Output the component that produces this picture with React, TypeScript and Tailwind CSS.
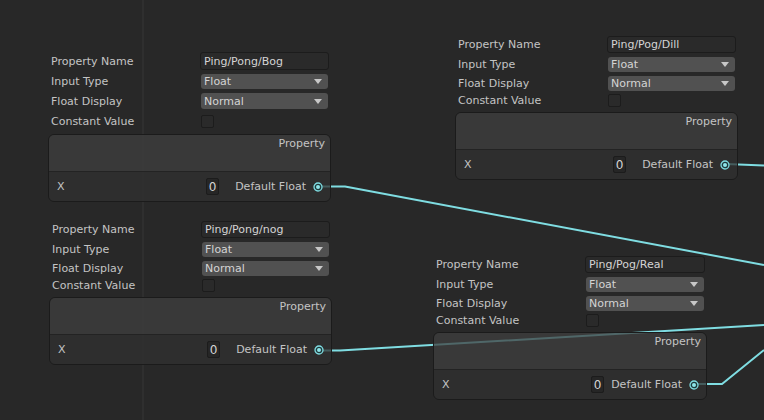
import React from "react";

type NodeProps = {
  pos: string;
  name: string;
  loose?: boolean;
};

function Dropdown({ value, h }: { value: string; h: string }) {
  return (
    <div className={`flex ${h} items-center justify-between rounded-[3px] bg-[#515151] pl-[3px] pr-[6px] text-[#d4d4d4]`}>
      <span className="leading-none">{value}</span>
      <svg width="8" height="5" viewBox="0 0 8 5">
        <path d="M0 0 L8 0 L4 5 Z" fill="#c8c8c8" />
      </svg>
    </div>
  );
}

function Port() {
  return (
    <svg width="10" height="10" viewBox="0 0 10 10" className="shrink-0">
      <circle cx="5" cy="5" r="4" fill="#1f3a3b" stroke="#7fdde2" strokeWidth="1.3" />
      <circle cx="5" cy="5" r="2" fill="#8ee6ea" />
    </svg>
  );
}

function Node({ pos, name, loose }: NodeProps) {
  return (
    <div className={`absolute ${pos}`}>
      <div className="text-[11px] leading-none text-[#c4c4c4]">
        <div className={`flex items-center ${loose ? "h-[18px]" : "h-[17px]"}`}>
          <div className="w-[152px] pl-[3px]">Property Name</div>
          <div className="mr-[2px] flex h-full flex-1 items-center rounded-[3px] border border-[#1c1c1c] bg-[#2a2a2a] pl-[3px] text-[#d4d4d4]">
            {name}
          </div>
        </div>
        <div className="mt-[4px] flex h-[15px] items-center">
          <div className="w-[153px] pl-[3px]">Input Type</div>
          <div className="mr-[3px] flex-1">
            <Dropdown value="Float" h="h-[15px]" />
          </div>
        </div>
        <div className={`mt-[4px] flex items-center ${loose ? "h-[16px]" : "h-[15px]"}`}>
          <div className="w-[153px] pl-[3px]">Float Display</div>
          <div className="mr-[3px] flex-1">
            <Dropdown value="Normal" h={loose ? "h-[16px]" : "h-[15px]"} />
          </div>
        </div>
        <div className={`flex h-[13px] items-center ${loose ? "mt-[6px]" : "mt-[3px]"}`}>
          <div className="w-[153px] pl-[3px]">Constant Value</div>
          <div className="h-[13px] w-[13px] rounded-[2px] border border-[#1c1c1c] bg-[#2a2a2a]" />
        </div>
      </div>
      <div
        className={`${loose ? "mt-[6px]" : "mt-[5px]"} overflow-hidden rounded-[6px] border border-[#1b1b1b] text-[11px] leading-none text-[#c4c4c4]`}
      >
        <div className="h-[36px] bg-[rgba(63,63,63,0.75)] pr-[5px] pt-[3px] text-right">Property</div>
        <div className="flex h-[30px] items-center border-t border-[#232323] bg-[rgba(48,48,48,0.75)]">
          <div className="w-[157px] pl-[8px]">X</div>
          <div className="flex h-[17px] w-[13px] items-center justify-center rounded-[2px] border border-[#1c1c1c] bg-[#262626] text-[12px] text-[#d4d4d4]">
            0
          </div>
          <div className="flex-1" />
          <div>Default Float</div>
          <div className="ml-[7px] mr-[7px] flex items-center">
            <Port />
          </div>
        </div>
      </div>
    </div>
  );
}

export default function App() {
  return (
    <div
      className="relative h-[420px] w-[764px] overflow-hidden bg-[#282828]"
      style={{ fontFamily: '"DejaVu Sans", Verdana, sans-serif' }}
    >
      <div className="absolute left-[142px] top-0 h-full w-[2px] bg-[#2f2f2f]" />
      <svg className="absolute left-0 top-0" width="764" height="420" viewBox="0 0 764 420">
        <g fill="none" stroke="#7fdde2" strokeWidth="2" strokeLinejoin="round">
          <path d="M319 186.5 L345 186.5 L764 265" />
          <path d="M320 350.5 L340 350.5 L764 325" />
          <path d="M726 164 L764 165.5" />
          <path d="M695 384 L722 384 L764 350" />
        </g>
      </svg>
      <Node pos="left-[48px] top-[52px] w-[283px]" name="Ping/Pong/Bog" loose />
      <Node pos="left-[455px] top-[36px] w-[283px]" name="Ping/Pog/Dill" />
      <Node pos="left-[49px] top-[221px] w-[283px]" name="Ping/Pong/nog" />
      <Node pos="left-[433px] top-[256px] w-[274px]" name="Ping/Pog/Real" />
    </div>
  );
}
